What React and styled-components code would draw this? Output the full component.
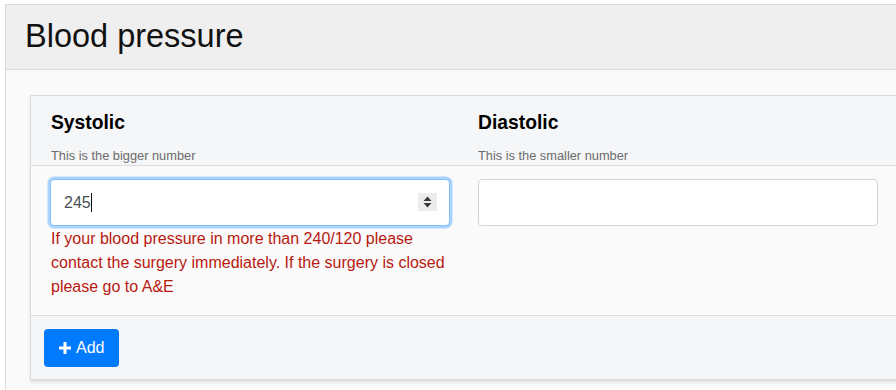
import React from "react";
import styled, { createGlobalStyle } from "styled-components";

const Global = createGlobalStyle`
  html, body { margin: 0; padding: 0; background: #ffffff; overflow: hidden; }
  body { font-family: "Liberation Sans", Arial, sans-serif; color: #212529; }
  * { box-sizing: border-box; }
`;

const Page = styled.div`
  padding: 4px 0 0 5px;
  width: 1100px;
`;

const Panel = styled.section`
  border: 1px solid #dcdcdc;
  background: #fafafa;
  width: 1000px;
  min-height: 400px;
`;

const PanelHeader = styled.header`
  background: #efefef;
  border-bottom: 1px solid #dcdcdc;
  height: 65px;
  display: flex;
  align-items: center;
  padding: 0 0 2px 19px;
`;

const Title = styled.h1`
  margin: 0;
  font-size: 32.5px;
  font-weight: 400;
  color: #111;
  line-height: 1.2;
`;

const PanelBody = styled.div`
  padding: 25px 0 0 24px;
`;

const Card = styled.div`
  width: 940px;
  background: #fafafa;
  border: 1px solid #dcdcdc;
  box-shadow: 0 2px 3px rgba(0, 0, 0, 0.12);
`;

const Columns = styled.div`
  display: grid;
  grid-template-columns: 400px 400px;
  column-gap: ${(p) => p.$gap || "28px"};
  padding: ${(p) => p.$pad};
  background: ${(p) => p.$bg};
  border-bottom: ${(p) => (p.$divider ? "1px solid #dcdcdc" : "none")};
`;

const FieldHead = styled.div`
  display: flex;
  flex-direction: column;
`;

const Label = styled.label`
  font-size: 19.3px;
  font-weight: 700;
  color: #000;
  line-height: 23px;
`;

const Help = styled.small`
  margin-top: 14px;
  font-size: 12.8px;
  line-height: 16px;
  color: #6c6c6c;
`;

const Field = styled.div`
  display: flex;
  flex-direction: column;
`;

const InputWrap = styled.div`
  position: relative;
  width: 400px;
`;

const Input = styled.input`
  width: 400px;
  height: 47px;
  padding: 0 13px;
  font: 16px "Liberation Sans", Arial, sans-serif;
  color: #495057;
  background: #fff;
  border: 1px solid ${(p) => (p.$focused ? "#80bdff" : "#ced4da")};
  border-radius: 4px;
  outline: none;
  box-shadow: ${(p) => (p.$focused ? "0 0 0 2.5px rgba(0, 123, 255, 0.3)" : "none")};
  caret-color: transparent;
`;

const Caret = styled.span`
  position: absolute;
  left: 41px;
  top: 14px;
  width: 1px;
  height: 19px;
  background: #111;
`;

const Spinner = styled.span`
  position: absolute;
  right: 13px;
  top: 14px;
  width: 19px;
  height: 18px;
  background: #ececec;
  display: flex;
  align-items: center;
  justify-content: center;
`;

const ErrorText = styled.div`
  margin-top: 1px;
  padding-left: 1px;
  font-size: 16px;
  line-height: 24px;
  color: #b8180f;
`;

const Footer = styled.div`
  background: #f5f6f8;
  padding: 13px 13px 12px;
`;

const Button = styled.button`
  display: inline-flex;
  align-items: center;
  gap: 4px;
  height: 38px;
  padding: 0 15px 0 14px;
  border: none;
  border-radius: 4px;
  background: #007bff;
  color: #fff;
  font: 16px "Liberation Sans", Arial, sans-serif;
  cursor: pointer;
`;

export default function App() {
  return (
    <Page>
      <Global />
      <Panel>
        <PanelHeader>
          <Title>Blood pressure</Title>
        </PanelHeader>
        <PanelBody>
          <Card>
            <Columns $pad="15px 20px 1px 20px" $gap="27px" $bg="#f5f6f8" $divider>
              <FieldHead>
                <Label htmlFor="sys">Systolic</Label>
                <Help>This is the bigger number</Help>
              </FieldHead>
              <FieldHead>
                <Label htmlFor="dia">Diastolic</Label>
                <Help>This is the smaller number</Help>
              </FieldHead>
            </Columns>
            <Columns $pad="13px 20px 16px 19px" $bg="#fafafa" $divider>
              <Field>
                <InputWrap>
                  <Input id="sys" type="text" defaultValue="245" $focused />
                  <Caret />
                  <Spinner>
                    <svg width="9" height="12" viewBox="0 0 9 12">
                      <path d="M4.5 0.5 L8.5 5 L0.5 5 Z" fill="#3a3a3a" />
                      <path d="M4.5 11.5 L8.5 7 L0.5 7 Z" fill="#3a3a3a" />
                    </svg>
                  </Spinner>
                </InputWrap>
                <ErrorText>
                  If your blood pressure in more than 240/120 please contact the
                  surgery immediately. If the surgery is closed please go to A&amp;E
                </ErrorText>
              </Field>
              <Field>
                <InputWrap>
                  <Input id="dia" type="text" />
                </InputWrap>
              </Field>
            </Columns>
            <Footer>
              <Button>
                <svg width="14" height="14" viewBox="0 0 14 14">
                  <path d="M7 1 V13 M1 7 H13" stroke="#fff" strokeWidth="3" />
                </svg>
                Add
              </Button>
            </Footer>
          </Card>
        </PanelBody>
      </Panel>
    </Page>
  );
}
